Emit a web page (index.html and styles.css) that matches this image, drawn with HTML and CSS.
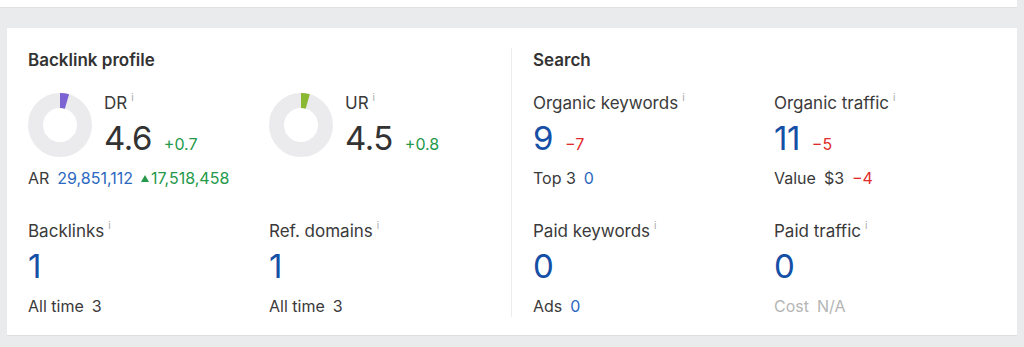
FILE: index.html
```html
<!DOCTYPE html>
<html lang="en">
<head>
<meta charset="utf-8">
<title>Overview</title>
<link rel="stylesheet" href="styles.css">
</head>
<body>
<div class="topbar"></div>
<div class="card">
  <section class="panel panel-left">
    <h2 class="panel-title">Backlink profile</h2>
    <div class="grid">
      <div class="metric">
        <div class="rating">
          <svg class="donut" width="64" height="64" viewBox="0 0 64 64">
            <circle cx="32" cy="32" r="24.5" fill="none" stroke="#ebebee" stroke-width="15"/>
            <circle cx="32" cy="32" r="24.5" fill="none" stroke="#7a62d2" stroke-width="15" stroke-dasharray="7.1 200" transform="rotate(-90 32 32)"/>
          </svg>
          <div class="rating-text">
            <div class="label">DR<span class="info">i</span></div>
            <div class="value-row"><span class="big dark">4.6</span><span class="delta up">+0.7</span></div>
          </div>
        </div>
        <div class="sub">AR<span class="sv blue">29,851,112</span><span class="sv up"><span class="tri"></span>17,518,458</span></div>
      </div>
      <div class="metric">
        <div class="rating">
          <svg class="donut" width="64" height="64" viewBox="0 0 64 64">
            <circle cx="32" cy="32" r="24.5" fill="none" stroke="#ebebee" stroke-width="15"/>
            <circle cx="32" cy="32" r="24.5" fill="none" stroke="#8bb833" stroke-width="15" stroke-dasharray="6.9 200" transform="rotate(-90 32 32)"/>
          </svg>
          <div class="rating-text">
            <div class="label">UR<span class="info">i</span></div>
            <div class="value-row"><span class="big dark">4.5</span><span class="delta up">+0.8</span></div>
          </div>
        </div>
      </div>
      <div class="metric">
        <div class="label">Backlinks<span class="info">i</span></div>
        <div class="value-row"><span class="big blue-big">1</span></div>
        <div class="sub">All time<span class="sv">3</span></div>
      </div>
      <div class="metric">
        <div class="label">Ref. domains<span class="info">i</span></div>
        <div class="value-row"><span class="big blue-big">1</span></div>
        <div class="sub">All time<span class="sv">3</span></div>
      </div>
    </div>
  </section>
  <section class="panel panel-right">
    <h2 class="panel-title">Search</h2>
    <div class="grid">
      <div class="metric">
        <div class="label">Organic keywords<span class="info">i</span></div>
        <div class="value-row"><span class="big blue-big">9</span><span class="delta down">−7</span></div>
        <div class="sub">Top 3<span class="sv blue">0</span></div>
      </div>
      <div class="metric">
        <div class="label">Organic traffic<span class="info">i</span></div>
        <div class="value-row"><span class="big blue-big">11</span><span class="delta down">−5</span></div>
        <div class="sub">Value<span class="sv">$3</span><span class="sv down">−4</span></div>
      </div>
      <div class="metric">
        <div class="label">Paid keywords<span class="info">i</span></div>
        <div class="value-row"><span class="big blue-big">0</span></div>
        <div class="sub">Ads<span class="sv blue">0</span></div>
      </div>
      <div class="metric">
        <div class="label">Paid traffic<span class="info">i</span></div>
        <div class="value-row"><span class="big blue-big">0</span></div>
        <div class="sub muted">Cost<span class="sv">N/A</span></div>
      </div>
    </div>
  </section>
</div>
</body>
</html>
```
FILE: styles.css
```css
html, body {
  margin: 0;
  padding: 0;
}
body {
  background: #eaebed;
  font-family: Inter, "Noto Sans", "Liberation Sans", sans-serif;
  color: #333;
  width: 1024px;
  height: 347px;
  overflow: hidden;
}
.topbar {
  width: 1017px;
  height: 7px;
  background: #fff;
  border-bottom: 1px solid #dfe0e3;
}
.card {
  margin: 20px 0 0 7px;
  width: 1010px;
  height: 307px;
  box-sizing: border-box;
  background: #fff;
  box-shadow: 0 1px 0 #dcdee1;
  padding: 20px 0;
  display: grid;
  grid-template-columns: 505px 505px;
}
.panel {
  padding-left: 21px;
  box-sizing: border-box;
}
.panel-left {
  border-right: 1px solid #ececee;
}
.panel-title {
  margin: 0;
  font-size: 17px;
  line-height: 24px;
  font-weight: 600;
  color: #333;
}
.grid {
  margin-top: 19px;
  display: grid;
  grid-template-columns: 241px 241px;
  row-gap: 30px;
}
.rating {
  display: flex;
  align-items: flex-start;
  gap: 12px;
}
.donut {
  flex: none;
  margin-top: 2px;
  display: block;
}
.label {
  font-size: 17px;
  line-height: 24px;
  color: #3a3a3a;
  white-space: nowrap;
}
.info {
  font-size: 10px;
  color: #a8a8a8;
  margin-left: 4px;
  position: relative;
  top: -8px;
}
.value-row {
  margin-top: 1px;
  height: 40px;
  display: flex;
  align-items: baseline;
  gap: 12px;
}
.big {
  font-size: 33px;
  line-height: 40px;
  font-weight: 400;
  letter-spacing: -0.5px;
}
.dark {
  color: #333;
}
.blue-big {
  color: #154fa6;
}
.delta {
  font-size: 16px;
}
.up {
  color: #24994a;
}
.down {
  color: #e12b2b;
}
.sub {
  margin-top: 9px;
  font-size: 16px;
  line-height: 22px;
  color: #3a3a3a;
  white-space: nowrap;
}
.sv {
  margin-left: 8px;
}
.blue {
  color: #2b68c0;
}
.muted {
  color: #b5b5b5;
}
.tri {
  display: inline-block;
  width: 0;
  height: 0;
  border-left: 4.5px solid transparent;
  border-right: 4.5px solid transparent;
  border-bottom: 7px solid #24994a;
  margin-right: 2px;
  vertical-align: 2px;
}
```
